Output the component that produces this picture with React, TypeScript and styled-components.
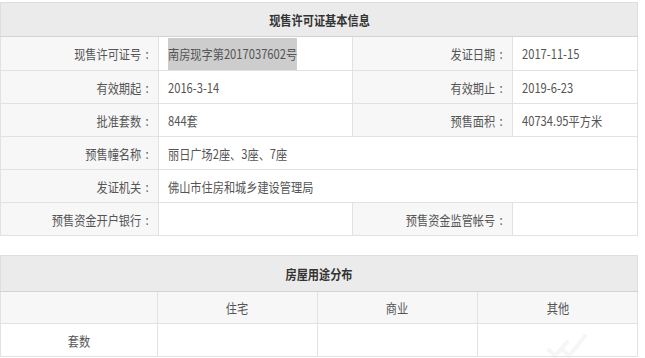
import React from "react";
import styled, { createGlobalStyle } from "styled-components";

const Global = createGlobalStyle`
  html, body { margin: 0; padding: 0; background: #fff; }
  body {
    font-family: "Noto Sans CJK SC", "Noto Sans", sans-serif;
    color: #555;
    overflow: hidden;
  }
`;

const Page = styled.div`
  position: relative;
  width: 645px;
  height: 358px;
  padding: 2px 8px 0 0;
  box-sizing: border-box;
  display: flex;
  flex-direction: column;
  gap: 19px;
`;

const Table = styled.table`
  width: 637px;
  border-collapse: collapse;
  table-layout: fixed;
  font-size: 13px;
`;

const HeadCell = styled.th<{ $h?: number }>`
  height: ${(p) => p.$h ?? 33}px;
  padding: 0;
  background: #ebebeb;
  border: 1px solid #dedede;
  border-bottom-color: #d3d3d3;
  color: #333;
  font-weight: 700;
  text-align: center;
`;

const Row = styled.tr<{ $h?: number }>`
  height: ${(p) => p.$h ?? 33}px;
`;

const Label = styled.td`
  padding: 0 9px 0 0;
  background: #f7f7f7;
  border: 1px solid #e2e2e2;
  text-align: right;
  color: #555;
`;

const Value = styled.td`
  padding: 0 0 0 9px;
  background: #fff;
  border: 1px solid #e2e2e2;
  text-align: left;
  color: #555;
  white-space: nowrap;
`;

const Cell = styled.td<{ $shade?: boolean }>`
  padding: 0;
  background: ${(p) => (p.$shade ? "#f7f7f7" : "#fff")};
  border: 1px solid #e2e2e2;
  text-align: center;
  color: #555;
`;

/* narrow rendering of the CJK text, as the page's condensed face */
const Txt = styled.span<{ $origin?: string }>`
  display: inline-block;
  transform: scaleX(0.86);
  transform-origin: ${(p) => p.$origin ?? "center"};
  white-space: nowrap;
`;

const Colon = styled.span`
  margin-left: 5px;
`;

/* selected text of the licence number */
const Selected = styled(Txt)`
  height: 32px;
  line-height: 32px;
  background: #cdcdcd;
  vertical-align: middle;
  margin-top: 1px;
`;

const Mark = styled.svg`
  position: absolute;
  left: 545px;
  bottom: 0;
  opacity: 0.3;
`;

const L = ({ children }: { children: React.ReactNode }) => (
  <Label>
    <Txt $origin="right">
      {children}
      <Colon>:</Colon>
    </Txt>
  </Label>
);

const V = ({ children }: { children?: React.ReactNode }) => (
  <Value>
    <Txt $origin="left">{children}</Txt>
  </Value>
);

export default function App() {
  return (
    <Page>
      <Global />
      <Table>
        <colgroup>
          <col style={{ width: 158 }} />
          <col style={{ width: 194 }} />
          <col style={{ width: 160 }} />
          <col style={{ width: 125 }} />
        </colgroup>
        <thead>
          <tr>
            <HeadCell colSpan={4}>
              <Txt>现售许可证基本信息</Txt>
            </HeadCell>
          </tr>
        </thead>
        <tbody>
          <Row>
            <L>现售许可证号</L>
            <Value>
              <Selected $origin="left">南房现字第2017037602号</Selected>
            </Value>
            <L>发证日期</L>
            <V>2017-11-15</V>
          </Row>
          <Row>
            <L>有效期起</L>
            <V>2016-3-14</V>
            <L>有效期止</L>
            <V>2019-6-23</V>
          </Row>
          <Row>
            <L>批准套数</L>
            <V>844套</V>
            <L>预售面积</L>
            <V>40734.95平方米</V>
          </Row>
          <Row>
            <L>预售幢名称</L>
            <Value colSpan={3}>
              <Txt $origin="left">丽日广场2座、3座、7座</Txt>
            </Value>
          </Row>
          <Row>
            <L>发证机关</L>
            <Value colSpan={3}>
              <Txt $origin="left">佛山市住房和城乡建设管理局</Txt>
            </Value>
          </Row>
          <Row>
            <L>预售资金开户银行</L>
            <V />
            <L>预售资金监管帐号</L>
            <V />
          </Row>
        </tbody>
      </Table>

      <Table>
        <colgroup>
          <col style={{ width: 157 }} />
          <col style={{ width: 160 }} />
          <col style={{ width: 160 }} />
          <col style={{ width: 160 }} />
        </colgroup>
        <thead>
          <tr>
            <HeadCell colSpan={4} $h={35}>
              <Txt>房屋用途分布</Txt>
            </HeadCell>
          </tr>
        </thead>
        <tbody>
          <Row $h={32}>
            <Cell $shade />
            <Cell $shade>
              <Txt>住宅</Txt>
            </Cell>
            <Cell $shade>
              <Txt>商业</Txt>
            </Cell>
            <Cell $shade>
              <Txt>其他</Txt>
            </Cell>
          </Row>
          <Row>
            <Cell>
              <Txt>套数</Txt>
            </Cell>
            <Cell />
            <Cell />
            <Cell />
          </Row>
        </tbody>
      </Table>

      <Mark width="44" height="30" viewBox="0 0 44 30" aria-hidden="true">
        <path d="M4 22 l6 6 l12 -14" fill="none" stroke="#e2e2e2" strokeWidth="4" strokeLinecap="round" strokeLinejoin="round" />
        <path d="M18 22 l6 6 l16 -20" fill="none" stroke="#e2e2e2" strokeWidth="4" strokeLinecap="round" strokeLinejoin="round" />
      </Mark>
    </Page>
  );
}
